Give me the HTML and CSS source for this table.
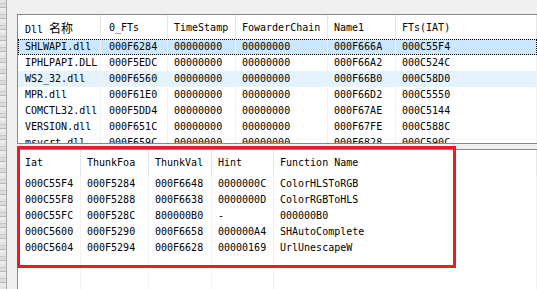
FILE: index.html
```html
<!DOCTYPE html>
<html>
<head>
<meta charset="utf-8">
<link rel="stylesheet" href="styles.css">
</head>
<body>
<div class="screen">
  <div class="edge"></div>
  <div class="panel">
    <div class="list top-list">
      <div class="row head">
        <div class="c t1">Dll <span class="cjk">名称</span></div>
        <div class="c t2">0_FTs</div>
        <div class="c t3">TimeStamp</div>
        <div class="c t4">FowarderChain</div>
        <div class="c t5">Name1</div>
        <div class="c t6">FTs(IAT)</div>
      </div>
      <div class="row sel">
        <div class="c t1">SHLWAPI.dll</div><div class="c t2">000F6284</div><div class="c t3">00000000</div><div class="c t4">00000000</div><div class="c t5">000F666A</div><div class="c t6">000C55F4</div>
      </div>
      <div class="row">
        <div class="c t1">IPHLPAPI.DLL</div><div class="c t2">000F5EDC</div><div class="c t3">00000000</div><div class="c t4">00000000</div><div class="c t5">000F66A2</div><div class="c t6">000C524C</div>
      </div>
      <div class="row hover">
        <div class="c t1">WS2_32.dll</div><div class="c t2">000F6560</div><div class="c t3">00000000</div><div class="c t4">00000000</div><div class="c t5">000F66B0</div><div class="c t6">000C58D0</div>
      </div>
      <div class="row">
        <div class="c t1">MPR.dll</div><div class="c t2">000F61E0</div><div class="c t3">00000000</div><div class="c t4">00000000</div><div class="c t5">000F66D2</div><div class="c t6">000C5550</div>
      </div>
      <div class="row">
        <div class="c t1">COMCTL32.dll</div><div class="c t2">000F5DD4</div><div class="c t3">00000000</div><div class="c t4">00000000</div><div class="c t5">000F67AE</div><div class="c t6">000C5144</div>
      </div>
      <div class="row">
        <div class="c t1">VERSION.dll</div><div class="c t2">000F651C</div><div class="c t3">00000000</div><div class="c t4">00000000</div><div class="c t5">000F67FE</div><div class="c t6">000C588C</div>
      </div>
      <div class="row">
        <div class="c t1">msvcrt.dll</div><div class="c t2">000F659C</div><div class="c t3">00000000</div><div class="c t4">00000000</div><div class="c t5">000F6828</div><div class="c t6">000C590C</div>
      </div>
    </div>

    <div class="list bottom-list">
      <div class="row head">
        <div class="c b1">Iat</div>
        <div class="c b2">ThunkFoa</div>
        <div class="c b3">ThunkVal</div>
        <div class="c b4">Hint</div>
        <div class="c b5">Function Name</div>
      </div>
      <div class="row">
        <div class="c b1">000C55F4</div><div class="c b2">000F5284</div><div class="c b3">000F6648</div><div class="c b4">0000000C</div><div class="c b5">ColorHLSToRGB</div>
      </div>
      <div class="row">
        <div class="c b1">000C55F8</div><div class="c b2">000F5288</div><div class="c b3">000F6638</div><div class="c b4">0000000D</div><div class="c b5">ColorRGBToHLS</div>
      </div>
      <div class="row">
        <div class="c b1">000C55FC</div><div class="c b2">000F528C</div><div class="c b3">800000B0</div><div class="c b4">-</div><div class="c b5">000000B0</div>
      </div>
      <div class="row">
        <div class="c b1">000C5600</div><div class="c b2">000F5290</div><div class="c b3">000F6658</div><div class="c b4">000000A4</div><div class="c b5">SHAutoComplete</div>
      </div>
      <div class="row">
        <div class="c b1">000C5604</div><div class="c b2">000F5294</div><div class="c b3">000F6628</div><div class="c b4">00000169</div><div class="c b5">UrlUnescapeW</div>
      </div>
      <div class="row fill">
        <div class="c b1"></div><div class="c b2"></div><div class="c b3"></div><div class="c b4"></div><div class="c b5"></div>
      </div>
    </div>

    <div class="mark"></div>
  </div>
</div>
</body>
</html>
```

FILE: styles.css
```css
html, body {
  margin: 0;
  padding: 0;
}
body {
  background: #f0f0f0;
  font-family: "DejaVu Sans Mono", "Liberation Mono", monospace;
  font-size: 10px;
  color: #000;
  overflow: hidden;
}
.screen {
  display: flex;
  width: 537px;
  height: 289px;
  overflow: hidden;
}
.edge {
  width: 6px;
  flex: none;
  border-right: 1px solid #a8a8a8;
  background:
    repeating-linear-gradient(180deg, #e4e4e4 0 3px, #c9c9c9 3px 4px, #dcdcdc 4px 7px, #b8b8c4 7px 8px, #ececec 8px 11px);
}
.panel {
  flex: 1;
  position: relative;
  display: flex;
  flex-direction: column;
  padding: 14px 0 0 10px;
  min-width: 0;
}
.list {
  background: #fff;
  display: flex;
  flex-direction: column;
  overflow: hidden;
}
.top-list {
  height: 130px;
  box-sizing: border-box;
  border: 1px solid #828790;
  border-right: none;
  flex: none;
}
.bottom-list {
  flex: 1;
  margin-top: 5px;
  border-top: 1px solid #828790;
  border-left: 1px solid #828790;
}
.row {
  display: flex;
  height: 16px;
  line-height: 16px;
  flex: none;
  white-space: nowrap;
}
.row.head {
  height: 24px;
  line-height: 25px;
}
.bottom-list .row.head {
  height: 26px;
  line-height: 25px;
}
.row.fill {
  flex: 1;
  height: auto;
}
.row.sel {
  background: #cce8ff;
  outline: 1px dotted #000;
  outline-offset: -1px;
}
.row.hover {
  background: #e5f3ff;
}
.c {
  box-sizing: border-box;
  flex: none;
  padding-left: 6px;
  overflow: hidden;
  border-right: 1px solid #f2f2f2;
}
.head .c {
  border-right-color: #e5e5e5;
}
.cjk {
  font-family: "Noto Sans CJK SC", sans-serif;
  font-size: 12px;
}
.t1 { width: 83px; padding-left: 7px; }
.t2 { width: 67px; padding-left: 8px; }
.t3 { width: 68px; }
.t4 { width: 92px; }
.t5 { width: 68px; }
.t6 { flex: 1; }
.b1 { width: 63px; padding-left: 7px; }
.b2 { width: 68px; }
.b3 { width: 63px; }
.b4 { width: 62px; }
.b5 { flex: 1; }
.mark {
  position: absolute;
  left: 10px;
  top: 146px;
  width: 439px;
  height: 122px;
  box-sizing: border-box;
  border: 3px solid #ed1c24;
}
```
